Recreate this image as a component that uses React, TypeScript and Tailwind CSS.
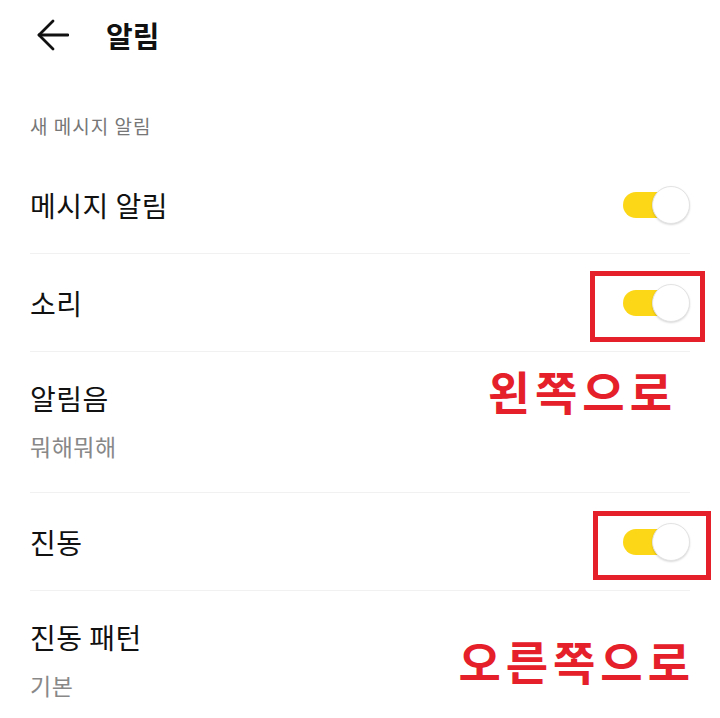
const Toggle = ({ marked, box }: { marked?: boolean; box?: string }) => (
    <div className="relative w-[67px] h-[38px] flex-shrink-0">
        <div className="absolute left-0 top-[6px] w-[58px] h-[26px] rounded-full bg-[#fcd718]" />
        <div className="absolute right-0 top-0 w-[38px] h-[38px] rounded-full bg-white border border-[#e3e3e3] shadow-[0_1px_2px_rgba(0,0,0,0.15)]" />
        {marked && <div className={`absolute border-[5px] border-[#e5202a] ${box}`} />}
    </div>
);

const Row = ({ label, children }: { label: string; children?: React.ReactNode }) => (
    <div className="h-[98px] flex items-center justify-between border-b border-[#f1f1f1]">
        <span className="text-[28px] tracking-[0.5px] text-[#111]">{label}</span>
        {children}
    </div>
);

const App = () => {
    return (
        <div className="w-[720px] h-[718px] bg-white overflow-hidden font-['Noto_Sans_CJK_KR',sans-serif]">
            <div className="h-[70px] flex items-center pl-[37px]">
                <svg width="32" height="32" viewBox="0 0 32 32" fill="none" stroke="#111" strokeWidth="2.8" strokeLinecap="round" strokeLinejoin="round">
                    <path d="M2 16H31" />
                    <path d="M16 2 2 16l14 14" />
                </svg>
                <h1 className="ml-[37px] text-[29px] font-bold text-[#111] leading-none">알림</h1>
            </div>

            <div className="mt-[44px] px-[30px] text-[19px] leading-[24px] text-[#777] tracking-[1px]">새 메시지 알림</div>

            <div className="mt-[18px] px-[30px]">
                <Row label="메시지 알림">
                    <Toggle />
                </Row>
                <Row label="소리">
                    <Toggle marked box="-left-[33px] -right-[15px] -top-[13px] -bottom-[20px]" />
                </Row>

                <div className="h-[141px] flex items-start justify-between border-b border-[#f1f1f1] pt-[29px]">
                    <div className="flex flex-col gap-[16px]">
                        <span className="text-[28px] leading-[34px] tracking-[0.5px] text-[#111]">알림음</span>
                        <span className="text-[23px] leading-[30px] tracking-[0.5px] text-[#888]">뭐해뭐해</span>
                    </div>
                    <span className="-mt-[14px] mr-[13px] text-[46px] leading-none tracking-[5px] font-bold text-[#e5202a]">왼쪽으로</span>
                </div>

                <Row label="진동">
                    <Toggle marked box="-left-[30px] -right-[21px] -top-[12px] -bottom-[19px]" />
                </Row>

                <div className="flex items-start justify-between pt-[29px]">
                    <div className="flex flex-col gap-[16px]">
                        <span className="text-[28px] leading-[34px] tracking-[0.5px] text-[#111]">진동 패턴</span>
                        <span className="text-[23px] leading-[30px] tracking-[0.5px] text-[#888]">기본</span>
                    </div>
                    <span className="mt-[17px] -mr-[5px] text-[46px] leading-none tracking-[5px] font-bold text-[#e5202a]">오른쪽으로</span>
                </div>
            </div>
        </div>
    );
};

export default App;
